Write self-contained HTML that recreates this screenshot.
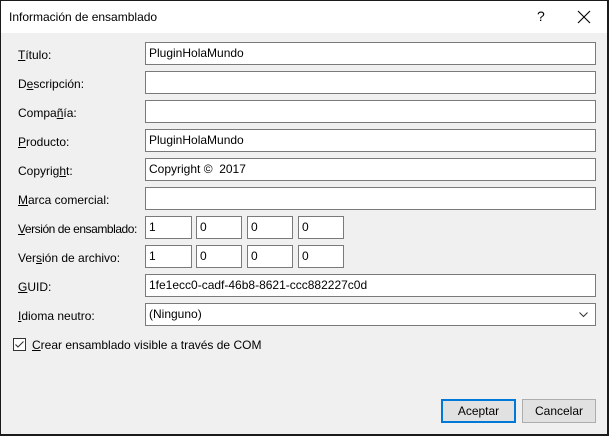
<!DOCTYPE html>
<html><head><meta charset="utf-8"><style>
*{margin:0;padding:0;box-sizing:border-box}
body{width:609px;height:436px;overflow:hidden;font-family:"Liberation Sans",sans-serif;font-size:12px;color:#000;background:#f0f0f0}
.win{position:absolute;left:0;top:0;width:609px;height:436px;border:1px solid #1a1a1a;border-right-width:2px;border-bottom-width:2px;background:#f0f0f0}
.tb{position:absolute;left:0;top:0;right:0;height:32px;background:#fff}
.tt{position:absolute;left:8px;top:9px;font-size:12px}
.q{position:absolute;left:536px;top:7px;font-size:14px}
.x{position:absolute;left:576px;top:9px}
.l{position:absolute;left:17px}
.i{position:absolute;height:23px;background:#fff;border:1px solid #7a7a7a;padding:3px 0 0 3px;white-space:nowrap}
u{text-decoration:underline}
.btn{position:absolute;top:398px;height:24px;border:1px solid #adadad;background:#e1e1e1;text-align:center;line-height:22px}
</style></head><body><div class="win">
<div class="tb"><div class="tt">Información de ensamblado</div><div class="q">?</div>
<svg class="x" width="14" height="14" viewBox="0 0 14 14"><path d="M1 1L13 13M13 1L1 13" stroke="#000" stroke-width="1.1"/></svg></div>

<div class="l" style="top:47px"><u>T</u>ítulo:</div><div class="i" style="left:144px;top:41px;width:451px">PluginHolaMundo</div>
<div class="l" style="top:76px">D<u>e</u>scripción:</div><div class="i" style="left:144px;top:70px;width:451px"></div>
<div class="l" style="top:105px">Compa<u>ñ</u>ía:</div><div class="i" style="left:144px;top:99px;width:451px"></div>
<div class="l" style="top:134px"><u>P</u>roducto:</div><div class="i" style="left:144px;top:128px;width:451px">PluginHolaMundo</div>
<div class="l" style="top:163px">Copyrig<u>h</u>t:</div><div class="i" style="left:144px;top:157px;width:451px">Copyright ©&nbsp; 2017</div>
<div class="l" style="top:192px"><u>M</u>arca comercial:</div><div class="i" style="left:144px;top:186px;width:451px"></div>
<div class="l" style="top:221px;letter-spacing:-0.45px"><u>V</u>ersión de ensamblado:</div>
<div class="i" style="left:144px;top:215px;width:47px">1</div><div class="i" style="left:195px;top:215px;width:46px">0</div><div class="i" style="left:246px;top:215px;width:46px">0</div><div class="i" style="left:297px;top:215px;width:46px">0</div>
<div class="l" style="top:250px">Ver<u>s</u>ión de archivo:</div>
<div class="i" style="left:144px;top:244px;width:47px">1</div><div class="i" style="left:195px;top:244px;width:46px">0</div><div class="i" style="left:246px;top:244px;width:46px">0</div><div class="i" style="left:297px;top:244px;width:46px">0</div>
<div class="l" style="top:279px"><u>G</u>UID:</div><div class="i" style="left:144px;top:273px;width:451px">1fe1ecc0-cadf-46b8-8621-ccc882227c0d</div>
<div class="l" style="top:308px"><u>I</u>dioma neutro:</div><div class="i" style="left:144px;top:302px;width:451px">(Ninguno)
<svg style="position:absolute;right:7px;top:8px" width="9" height="6" viewBox="0 0 9 6"><path d="M0.5 0.5L4.5 4.5L8.5 0.5" stroke="#333" fill="none"/></svg></div>
<svg style="position:absolute;left:12px;top:337px" width="13" height="13" viewBox="0 0 13 13"><rect x="0.5" y="0.5" width="12" height="12" fill="#fff" stroke="#333"/><path d="M2.5 6.5L5 9L10.5 3.5" stroke="#333" fill="none" stroke-width="1.1"/></svg>
<div style="position:absolute;left:31px;top:337px"><u>C</u>rear ensamblado visible a través de COM</div>
<div class="btn" style="left:440px;width:75px;border:2px solid #0078d7;line-height:20px">Aceptar</div>
<div class="btn" style="left:521px;width:74px">Cancelar</div>
</div></body></html>
